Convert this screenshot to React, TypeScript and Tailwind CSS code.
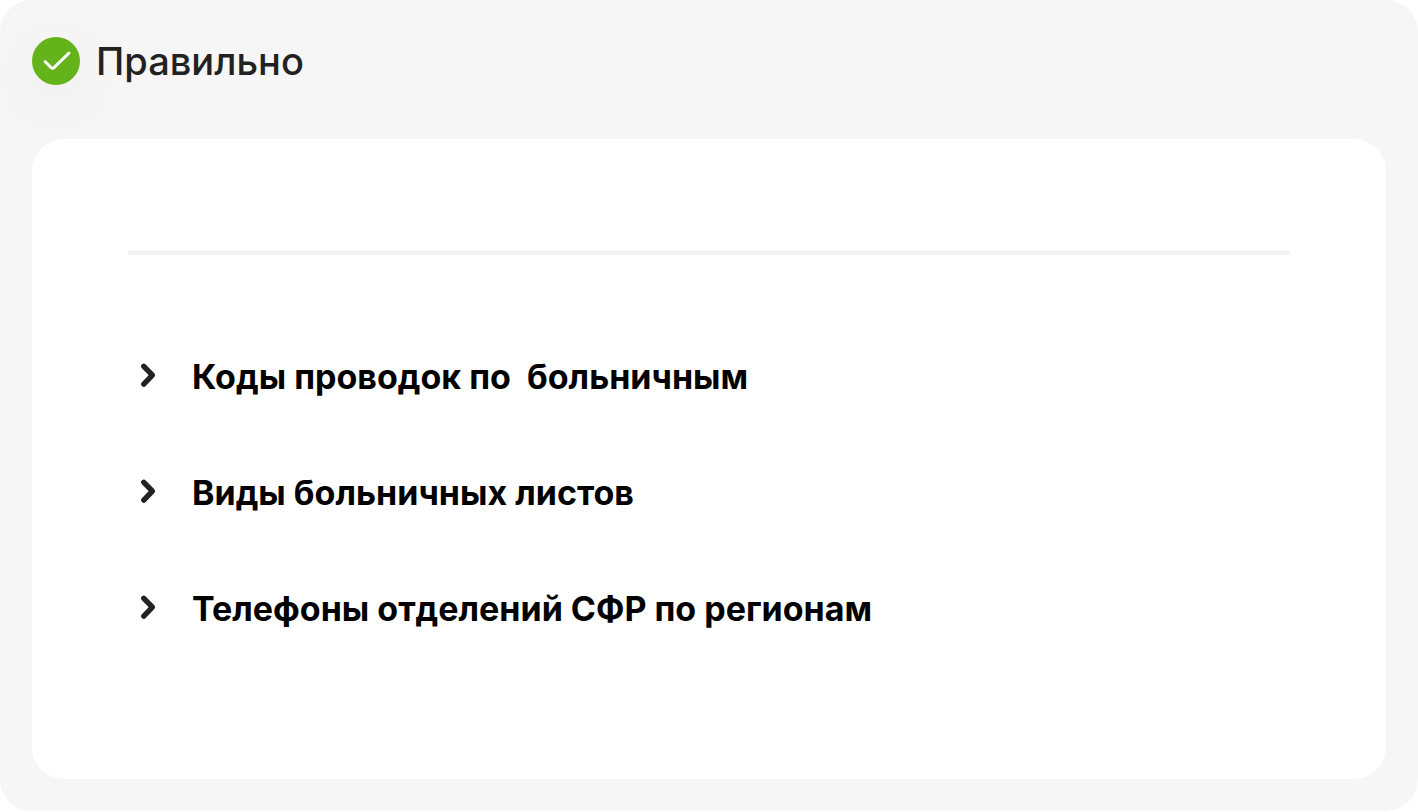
import React from 'react';

const sections = [
  'Коды проводок по  больничным',
  'Виды больничных листов',
  'Телефоны отделений СФР по регионам',
];

function CheckBadge() {
  return (
    <span className="flex size-12 shrink-0 items-center justify-center rounded-full bg-[#65b31b] shadow-[0_16px_64px_rgba(0,0,0,0.06)]">
      <svg viewBox="0 0 48 48" fill="none" className="size-12" aria-hidden="true">
        <path d="M13.2 24.7L19.2 30.6Q20.6 31.9 22 30.6L37 16" stroke="white" strokeWidth="3" strokeLinecap="round" strokeLinejoin="round" />
      </svg>
    </span>
  );
}

function SectionToggle({ title }: { title: string }) {
  return (
    <button type="button" aria-expanded={false} className="flex items-center gap-6 text-left">
      <svg viewBox="0 0 40 40" fill="none" className="size-10 shrink-0" aria-hidden="true">
        <path d="M15.8 9.3L24.4 18.2L15.8 27.1" stroke="#222" strokeWidth="5.4" strokeLinecap="round" strokeLinejoin="round" />
      </svg>
      <span className="whitespace-pre-wrap text-[34px] leading-13 font-bold text-black">{title}</span>
    </button>
  );
}

export default function App() {
  return (
    <main className="rounded-[32px] bg-[#f6f6f6] px-8 pt-8 pb-8 font-['Inter',sans-serif]">
      <header className="flex items-center gap-4">
        <CheckBadge />
        <h1 className="text-[38px] leading-[58px] font-medium text-[#222]">Правильно</h1>
      </header>
      <section className="mt-[49px] rounded-[32px] bg-white px-24 pt-28 pb-36">
        <hr className="border-0 border-t-4 border-[#f2f2f2]" />
        <div className="mt-24 flex flex-col gap-16">
          {sections.map((title) => (
            <SectionToggle key={title} title={title} />
          ))}
        </div>
      </section>
    </main>
  );
}
